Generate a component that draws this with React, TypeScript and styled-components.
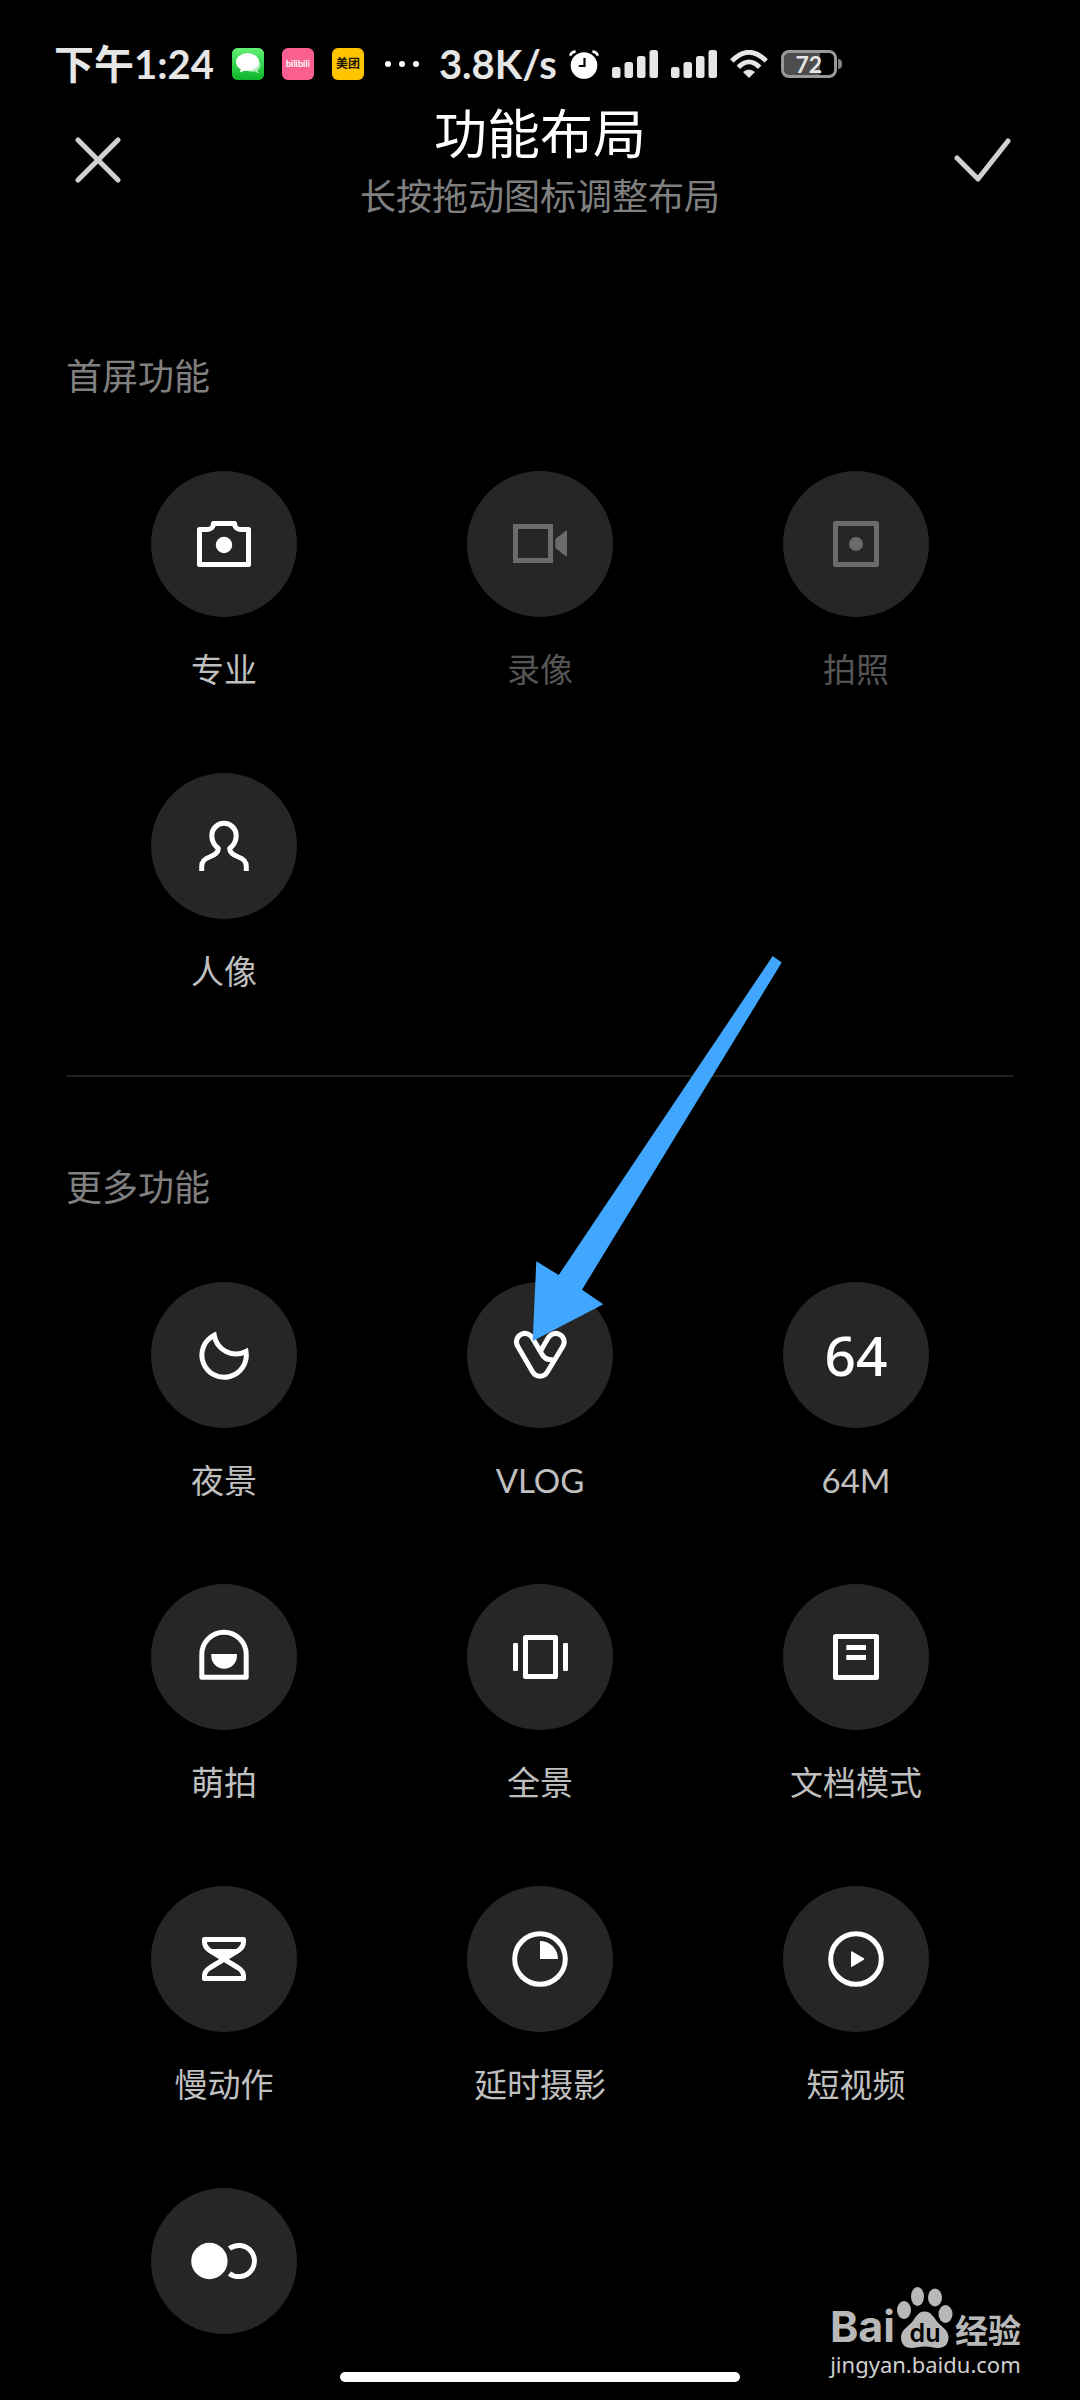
import React from "react";
import styled, { createGlobalStyle } from "styled-components";

const GlobalStyle = createGlobalStyle`
  *, *::before, *::after { box-sizing: border-box; }
  body {
    margin: 0;
    background: #000;
    color: #fff;
    font-family: Lato, "Noto Sans CJK SC", sans-serif;
  }
  button { font: inherit; color: inherit; background: none; border: 0; padding: 0; cursor: pointer; }
  ul { list-style: none; margin: 0; padding: 0; }
  h1, h2, p { margin: 0; font-weight: 400; }
  svg { display: block; }
`;

const Screen = styled.div`
  position: relative;
  min-height: 100vh;
  display: flex;
  flex-direction: column;
  background: #000;
`;

/* ---------- status bar ---------- */

const StatusBar = styled.div`
  display: flex;
  align-items: center;
  height: 84px;
  padding: 44px 54px 0;
  color: #e6e6e6;
`;

const StatusText = styled.span`
  font-size: 40px;
  line-height: 40px;
  font-weight: 700;
  white-space: nowrap;
`;

const Notifications = styled.div`
  display: flex;
  align-items: center;
  gap: 18px;
  margin: 0 20px 0 18px;
`;

const AppBadge = styled.span<{ $bg: string; $fg: string; $size: number }>`
  display: flex;
  align-items: center;
  justify-content: center;
  width: 32px;
  height: 32px;
  border-radius: 6px;
  overflow: hidden;
  background: ${(p) => p.$bg};
  color: ${(p) => p.$fg};
  font-size: ${(p) => p.$size}px;
  line-height: 32px;
  font-weight: 700;
`;

const Dots = styled.span`
  display: flex;
  gap: 8px;
  margin-left: 3px;
`;

const Dot = styled.i`
  width: 6px;
  height: 6px;
  border-radius: 3px;
  background: #fff;
`;

const Indicators = styled.div`
  display: flex;
  align-items: center;
  gap: 13px;
  margin-left: 12px;
`;

const Battery = styled.div`
  display: flex;
  align-items: center;
`;

const BatteryCell = styled.span`
  display: flex;
  align-items: center;
  justify-content: center;
  width: 56px;
  height: 28px;
  border: 3px solid #999;
  border-radius: 8px;
  background: linear-gradient(90deg, #4d4d4d 72%, #000 72%);
  font-size: 23px;
  line-height: 22px;
  font-weight: 700;
`;

const BatteryTip = styled.i`
  width: 4px;
  height: 10px;
  margin-left: 1px;
  border-radius: 0 5px 5px 0;
  background: #808080;
`;

/* ---------- header ---------- */

const Header = styled.header`
  display: flex;
  align-items: center;
  justify-content: space-between;
  padding: 18px 64px 0;
`;

const IconButton = styled.button`
  display: flex;
  align-items: center;
  justify-content: center;
  width: 68px;
  height: 66px;
`;

const Titles = styled.div`
  display: flex;
  flex-direction: column;
  align-items: center;
  gap: 8px;
`;

const Title = styled.h1`
  font-size: 53px;
  line-height: 64px;
`;

const Subtitle = styled.p`
  font-size: 36px;
  line-height: 44px;
  color: #808080;
`;

/* ---------- feature sections ---------- */

const Main = styled.main`
  padding: 136px 66px 0;
`;

const SectionTitle = styled.h2`
  margin-bottom: 73px;
  font-size: 36px;
  line-height: 44px;
  color: #808080;
`;

const Divider = styled.hr`
  height: 2px;
  margin: 84px 0 88px;
  border: 0;
  background: #1f1f1f;
`;

const Grid = styled.ul`
  display: grid;
  grid-template-columns: repeat(3, 1fr);
  row-gap: 84px;
`;

const Cell = styled.li`
  display: flex;
  justify-content: center;
`;

const Tile = styled.button`
  display: flex;
  flex-direction: column;
  align-items: center;
  gap: 32px;
  color: #fff;
  &:disabled { color: #6b6b6b; cursor: default; }
`;

const Disc = styled.span`
  position: relative;
  display: flex;
  align-items: center;
  justify-content: center;
  width: 146px;
  height: 146px;
  border-radius: 50%;
  background: #262626;
`;

const Label = styled.span`
  font-size: 33px;
  line-height: 40px;
  color: #bfbfbf;
  ${Tile}:disabled & { color: #555; }
`;

const DiscText = styled.span`
  font-family: "Noto Sans", sans-serif;
  font-size: 55px;
  line-height: 64px;
  font-weight: 500;
`;

const Pointer = styled.svg`
  position: absolute;
  left: 65px;
  bottom: 86px;
  z-index: 1;
  pointer-events: none;
`;

/* ---------- bottom ---------- */

const HomeArea = styled.footer`
  display: flex;
  justify-content: center;
  margin-top: auto;
  padding: 38px 0 18px;
`;

const HomeBar = styled.div`
  width: 37%;
  height: 10px;
  border-radius: 5px;
  background: #fff;
`;

const Watermark = styled.div`
  position: absolute;
  right: 59px;
  bottom: 22px;
  display: flex;
  flex-direction: column;
  align-items: center;
  gap: 2px;
  color: #b8b8b8;
`;

const Brand = styled.div`
  display: flex;
  align-items: flex-end;
  gap: 2px;
`;

const BrandLatin = styled.span`
  font-family: Inter, sans-serif;
  font-size: 43px;
  line-height: 44px;
  font-weight: 700;
`;

const BrandHan = styled.span`
  font-size: 33px;
  line-height: 36px;
  font-weight: 700;
`;

const Site = styled.span`
  font-family: "Noto Sans", sans-serif;
  font-size: 22px;
  line-height: 28px;
  color: #d0d0d0;
`;

/* ---------- drawings ---------- */

const Glyph = ({ children }: { children: React.ReactNode }) => (
  <svg width="146" height="146" viewBox="0 0 146 146" fill="none" stroke="currentColor" strokeWidth="5" aria-hidden="true">
    {children}
  </svg>
);

const solid = { fill: "currentColor", stroke: "none" };

const ProIcon = () => (
  <Glyph>
    <path strokeLinejoin="round" d="M48.5 58.5h8c3 0 6-2 6-6h21c0 4 3 6 6 6h8v35h-49z" />
    <circle cx="73" cy="74" r="8.2" {...solid} />
  </Glyph>
);
const VideoIcon = () => (
  <Glyph>
    <rect x="48.5" y="55.5" width="35" height="34" />
    <path d="M88.3 68L98.5 60Q100 59.3 100 61V84Q100 85.7 98.5 85L88.3 77z" {...solid} />
  </Glyph>
);
const PhotoIcon = () => (
  <Glyph>
    <rect x="52.5" y="52.5" width="41" height="41" strokeLinejoin="round" />
    <circle cx="73" cy="73" r="7" {...solid} />
  </Glyph>
);
const PortraitIcon = () => (
  <Glyph>
    <path d="M50.7 98V93.5C50.7 88 54 85.5 58.5 84C63.5 82.2 67.3 80 67.3 75.5C63.5 72.5 60.8 68.5 60.8 62.5A12.2 12.2 0 0 1 85.2 62.5C85.2 68.5 82.5 72.5 78.7 75.5C78.7 80 82.5 82.2 87.5 84C92 85.5 95.3 88 95.3 93.5V98" strokeLinejoin="round" />
  </Glyph>
);
const NightIcon = () => (
  <Glyph>
    <path d="M63.2 53.2A22 22 0 0 0 95 69.5A22.2 22.2 0 1 1 63.2 53.2z" />
  </Glyph>
);
const VlogIcon = () => (
  <Glyph>
    <path d="M73 70L81 56.2A8.5 8.5 0 1 1 95.6 64.8L80.3 90A8.5 8.5 0 0 1 65.7 90L51 64.8A8.5 8.5 0 1 1 65.6 56.2L74.8 72C77 76 80 78.5 86 77.5" />
  </Glyph>
);
const CuteIcon = () => (
  <Glyph>
    <path strokeLinejoin="round" d="M50.8 93.2V70.5A22.2 22.2 0 0 1 95.2 70.5V93.2z" />
    <path d="M60.3 70h25.6v2a12.8 12.8 0 0 1-25.6 0z" {...solid} />
  </Glyph>
);
const PanoramaIcon = () => (
  <Glyph>
    <rect x="58.5" y="53.5" width="30" height="39" strokeLinejoin="round" />
    <rect x="46" y="59" width="5" height="28" rx="1.2" {...solid} />
    <rect x="96" y="59" width="5" height="28" rx="1.2" {...solid} />
  </Glyph>
);
const DocumentIcon = () => (
  <Glyph>
    <rect x="52.5" y="52.5" width="41" height="41" strokeLinejoin="round" />
    <path d="M63.3 63.5H83M63.3 73.5H83" />
  </Glyph>
);
const SlowIcon = () => (
  <Glyph>
    <path strokeLinejoin="round" d="M53.5 53.5H92.5V56C92.5 60 90.5 62.3 87.5 64.3L58.5 82C55.5 84 53.5 86.5 53.5 90V92.5H92.5V90C92.5 86.5 90.5 84 87.5 82L58.5 64.3C55.5 62.3 53.5 60 53.5 56z" />
    <path d="M60 63H86L73 73z" {...solid} />
  </Glyph>
);
const TimelapseIcon = () => (
  <Glyph>
    <circle cx="73" cy="73" r="25.3" />
    <path d="M73 55A18 18 0 0 1 91 73H73z" {...solid} />
  </Glyph>
);
const ShortIcon = () => (
  <Glyph>
    <circle cx="73" cy="73" r="25.3" />
    <path d="M68 66Q68 64.8 69.2 65.5L80.8 72.3Q82 73 80.8 73.7L69.2 80.7Q68 81.4 68 80z" {...solid} />
  </Glyph>
);
const DualIcon = () => (
  <Glyph>
    <circle cx="58.4" cy="73" r="18.2" {...solid} />
    <path d="M78.4 60.6A15.6 15.6 0 1 1 78.4 85.4" />
  </Glyph>
);

const Signal = () => (
  <svg width="46" height="28" viewBox="0 0 46 28" fill="currentColor" aria-hidden="true">
    <rect x="0" y="17" width="8.5" height="11" rx="2.5" />
    <rect x="12.5" y="12" width="8.5" height="16" rx="2.5" />
    <rect x="25" y="6" width="8.5" height="22" rx="2.5" />
    <rect x="37.5" y="0" width="8.5" height="28" rx="2.5" />
  </svg>
);

const Alarm = () => (
  <svg width="30" height="29" viewBox="0 0 30 29" aria-hidden="true">
    <circle cx="15" cy="15.5" r="13.3" fill="#fff" />
    <path d="M1.2 5.6Q2.5 1.6 6.6 1.6M28.8 5.6Q27.5 1.6 23.4 1.6" fill="none" stroke="#fff" strokeWidth="2.6" />
    <path d="M15.5 8V16H9.8" fill="none" stroke="#000" strokeWidth="2.2" />
  </svg>
);

const Wifi = () => (
  <svg width="38" height="28" viewBox="0 0 38 28" aria-hidden="true">
    <path d="M1.8 11Q19-6.5 36.2 11M8.3 17.3Q19 6.5 29.7 17.3" fill="none" stroke="currentColor" strokeWidth="4.8" />
    <path d="M13 22Q19 17 25 22L19 28z" fill="currentColor" />
  </svg>
);

const Messages = () => (
  <svg width="32" height="32" viewBox="0 0 32 32" aria-hidden="true">
    <defs>
      <linearGradient id="msg" x1="0" y1="0" x2="0" y2="1">
        <stop offset="0" stopColor="#62f075" />
        <stop offset="1" stopColor="#0cb52a" />
      </linearGradient>
    </defs>
    <rect width="32" height="32" fill="url(#msg)" />
    <path d="M27.5 13.5c2.200 5.500-.5 7.500-2 8.700l1.500 3-4.500-1.700c-4 .8-7-.5-8.500-2.500z" fill="#a6efb0" />
    <ellipse cx="15.500" cy="14" rx="11.500" ry="9" fill="#fff" />
    <path d="M9 20L8 24.500L14 22z" fill="#fff" />
  </svg>
);

const Paw = () => (
  <svg width="56" height="61" viewBox="0 0 56 61" fill="currentColor" aria-hidden="true">
    <ellipse cx="7" cy="23" rx="7" ry="9" />
    <ellipse cx="20.500" cy="9.500" rx="6.500" ry="9.500" />
    <ellipse cx="38" cy="10.500" rx="7" ry="9" />
    <ellipse cx="48.500" cy="27" rx="7" ry="9" />
    <path d="M27.500 24.500c6 0 9 5 12.500 10 4 5 11.500 8 11.500 16 0 7-4.500 10.500-10 10.500-5 0-8-1.500-13.500-1.500S19 61 14 61C8 61 4 57 4 50.500c0-8 7.500-11 11.500-16 3.500-5 6-10 12-10z" />
    <text x="28" y="55" textAnchor="middle" fill="#000" fontFamily="Inter, sans-serif" fontSize="25" fontWeight="600">du</text>
  </svg>
);

const Arrow = () => (
  <Pointer width="250" height="386" viewBox="532 956 250 386" aria-hidden="true">
    <path d="M532.700 1341L536.300 1261.300L558.700 1275L772.700 956L781.700 962.500L582 1289.700L603.300 1304.200z" fill="#40a6ff" />
  </Pointer>
);

/* ---------- data ---------- */

type Feature = { name: string; icon: React.ReactNode; disabled?: boolean; pointed?: boolean; bare?: boolean };

const firstScreen: Feature[] = [
  { name: "专业", icon: <ProIcon /> },
  { name: "录像", icon: <VideoIcon />, disabled: true },
  { name: "拍照", icon: <PhotoIcon />, disabled: true },
  { name: "人像", icon: <PortraitIcon /> },
];

const more: Feature[] = [
  { name: "夜景", icon: <NightIcon /> },
  { name: "VLOG", icon: <VlogIcon />, pointed: true },
  { name: "64M", icon: <DiscText>64</DiscText> },
  { name: "萌拍", icon: <CuteIcon /> },
  { name: "全景", icon: <PanoramaIcon /> },
  { name: "文档模式", icon: <DocumentIcon /> },
  { name: "慢动作", icon: <SlowIcon /> },
  { name: "延时摄影", icon: <TimelapseIcon /> },
  { name: "短视频", icon: <ShortIcon /> },
  { name: "双重曝光", icon: <DualIcon />, bare: true },
];

const FeatureGrid = ({ items }: { items: Feature[] }) => (
  <Grid>
    {items.map((f) => (
      <Cell key={f.name}>
        <Tile type="button" disabled={f.disabled} aria-label={f.name}>
          <Disc>
            {f.icon}
            {f.pointed && <Arrow />}
          </Disc>
          {!f.bare && <Label>{f.name}</Label>}
        </Tile>
      </Cell>
    ))}
  </Grid>
);

export default function App() {
  return (
    <Screen>
      <GlobalStyle />
      <StatusBar>
        <StatusText>下午1:24</StatusText>
        <Notifications>
          <AppBadge $bg="#22c53c" $fg="#fff" $size={12}><Messages /></AppBadge>
          <AppBadge $bg="#fb5f8f" $fg="#fff" $size={9}>bilibili</AppBadge>
          <AppBadge $bg="#ffc300" $fg="#1a1400" $size={12}>美团</AppBadge>
          <Dots><Dot /><Dot /><Dot /></Dots>
        </Notifications>
        <StatusText>3.8K/s</StatusText>
        <Indicators>
          <Alarm />
          <Signal />
          <Signal />
          <Wifi />
          <Battery>
            <BatteryCell>72</BatteryCell>
            <BatteryTip />
          </Battery>
        </Indicators>
      </StatusBar>

      <Header>
        <IconButton type="button" aria-label="关闭">
          <svg width="46" height="46" viewBox="0 0 46 46" fill="none" stroke="#d0d0d0" strokeWidth="5" strokeLinecap="round" aria-hidden="true">
            <path d="M3 3L43 43M43 3L3 43" />
          </svg>
        </IconButton>
        <Titles>
          <Title>功能布局</Title>
          <Subtitle>长按拖动图标调整布局</Subtitle>
        </Titles>
        <IconButton type="button" aria-label="完成">
          <svg width="58" height="44" viewBox="0 0 58 44" fill="none" stroke="#d0d0d0" strokeWidth="5" strokeLinecap="round" strokeLinejoin="round" aria-hidden="true">
            <path d="M4 20L25 41L55 3" />
          </svg>
        </IconButton>
      </Header>

      <Main>
        <SectionTitle>首屏功能</SectionTitle>
        <FeatureGrid items={firstScreen} />
        <Divider />
        <SectionTitle>更多功能</SectionTitle>
        <FeatureGrid items={more} />
      </Main>

      <HomeArea>
        <HomeBar />
      </HomeArea>

      <Watermark>
        <Brand>
          <BrandLatin>Bai</BrandLatin>
          <Paw />
          <BrandHan>经验</BrandHan>
        </Brand>
        <Site>jingyan.baidu.com</Site>
      </Watermark>
    </Screen>
  );
}
